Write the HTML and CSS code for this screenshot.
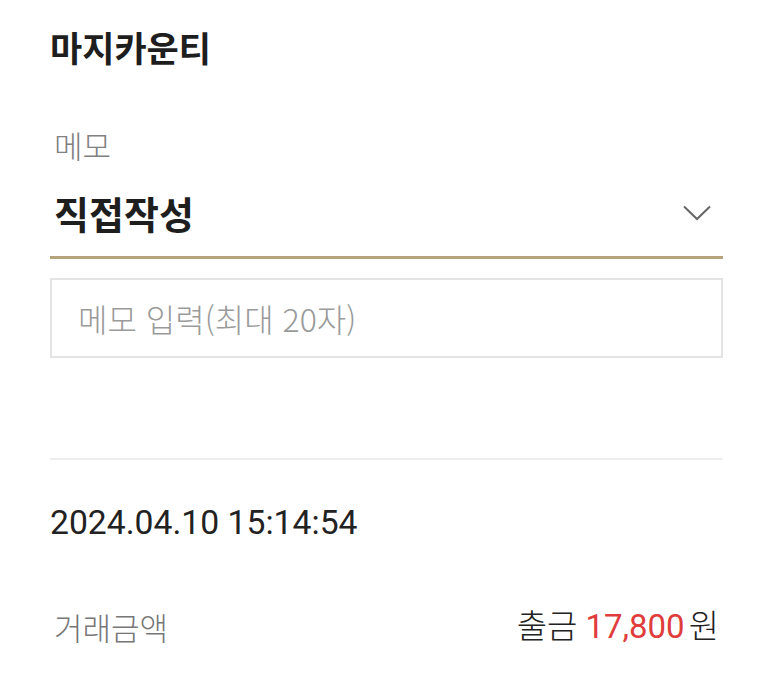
FILE: index.html
```html
<!DOCTYPE html>
<html lang="ko">
<head>
<meta charset="utf-8">
<link rel="stylesheet" href="styles.css">
</head>
<body>
<div class="page">
  <h1 class="title">마지카운티</h1>
  <div class="label">메모</div>
  <div class="select">
    <span class="select-value">직접작성</span>
    <svg class="chevron" width="28" height="16" viewBox="0 0 28 16"><path d="M1 1.5 L14 14 L27 1.5" fill="none" stroke="#666" stroke-width="2"/></svg>
  </div>
  <div class="memo-box"><span class="placeholder">메모 입력(최대 20자)</span></div>
  <div class="divider"></div>
  <div class="date">2024.04.10 15:14:54</div>
  <div class="amount-row">
    <span class="amount-label">거래금액</span>
    <span class="amount-value">출금 <span class="red">17,800</span>원</span>
  </div>
</div>
</body>
</html>
```
FILE: styles.css
```css
html, body { margin: 0; padding: 0; background: #fff; }
body { font-family: Roboto, "Noto Sans CJK KR", sans-serif; color: #222; }
.page { padding: 24px 50px 0 50px; }
.title { margin: 0; font-family: "Noto Sans CJK KR", sans-serif; font-size: 35px; font-weight: 700; line-height: 46px; color: #1e1e1e; }
.label { margin-top: 55px; padding-left: 4px; font-family: "Noto Sans CJK KR", sans-serif; font-size: 31px; font-weight: 300; line-height: 40px; color: #808080; }
.select { display: flex; align-items: center; justify-content: space-between; padding: 25px 12px 20px 4px; border-bottom: 3px solid #b4a37b; }
.select-value { font-family: "Noto Sans CJK KR", sans-serif; font-size: 38px; font-weight: 700; line-height: 46px; color: #1e1e1e; }
.chevron { display: block; }
.memo-box { margin-top: 19px; height: 80px; box-sizing: border-box; border: 2px solid #e3e3e3; display: flex; align-items: center; padding-left: 26px; }
.placeholder { font-family: "Noto Sans CJK KR", sans-serif; font-size: 32px; font-weight: 300; color: #9a9a9a; line-height: 40px; }
.divider { margin-top: 100px; height: 2px; background: #eeeeee; }
.date { margin-top: 43px; font-size: 33.7px; line-height: 40px; color: #222; }
.amount-row { margin-top: 64px; display: flex; justify-content: space-between; align-items: center; line-height: 40px; }
.amount-label { padding-left: 4px; font-family: "Noto Sans CJK KR", sans-serif; font-size: 31px; font-weight: 300; color: #777; }
.amount-value { padding-right: 4px; font-size: 33px; color: #222; font-family: Roboto, "Noto Sans CJK KR", sans-serif; font-weight: 300; }
.red { color: #e03c3c; font-weight: 400; margin-right: 4px; }
```
